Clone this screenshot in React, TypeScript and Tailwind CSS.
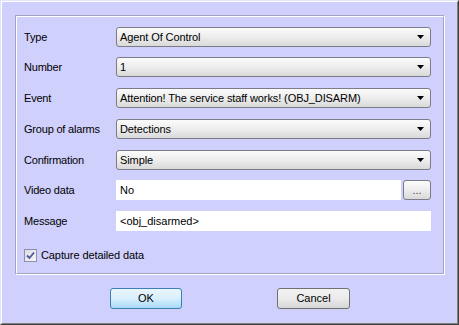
const font = { fontFamily: '"Liberation Sans", Arial, sans-serif' }

function Arrow() {
  return (
    <svg width="7" height="4" viewBox="0 0 7 4" className="shrink-0">
      <path d="M0 0H7L3.5 4Z" fill="#000" />
    </svg>
  )
}

function Combo({ value, className = '' }: { value: string; className?: string }) {
  return (
    <div
      className={`w-[315px] h-[20px] flex items-center justify-between pl-[3px] pr-[6px] rounded-[3px] border border-[#7c7c86] bg-gradient-to-b from-[#fbfbfb] via-[#ededed] to-[#d9d9d9] ${className}`}
    >
      <span className="text-[11px] leading-none tracking-[-0.1px] text-black whitespace-nowrap">{value}</span>
      <Arrow />
    </div>
  )
}

function Row({ label, children, className = '' }: { label: string; children: React.ReactNode; className?: string }) {
  return (
    <div className={`flex items-center ${className}`}>
      <div className="w-[92px] text-[11px] leading-none tracking-[-0.2px] text-black">{label}</div>
      {children}
    </div>
  )
}

export default function App() {
  return (
    <div className="w-[459px] h-[325px] bg-[#d0d0fd]" style={font}>
      {/* window frame */}
      <div className="w-full h-full border-l border-t border-r border-b border-l-[#e4e4ff] border-t-[#e4e4ff] border-r-[#404040] border-b-[#404040]">
        <div className="w-full h-full border-l border-t border-r border-b border-l-white border-t-white border-r-[#808080] border-b-[#808080] flex flex-col">
          {/* group box */}
          <div className="mt-[13px] ml-[13px] w-[430px] h-[260px] border border-t-[#a3a3c4] border-l-[#a3a3c4] border-r-white border-b-white">
            <div className="w-full h-full border border-t-white border-l-white border-r-[#a3a3c4] border-b-[#a3a3c4] pl-[7px] pt-[10px] flex flex-col">
              <Row label="Type">
                <Combo value="Agent Of Control" />
              </Row>
              <Row label="Number" className="mt-[10px]">
                <Combo value="1" />
              </Row>
              <Row label="Event" className="mt-[11px]">
                <Combo value="Attention! The service staff works! (OBJ_DISARM)" />
              </Row>
              <Row label="Group of alarms" className="mt-[11px]">
                <Combo value="Detections" />
              </Row>
              <Row label="Confirmation" className="mt-[11px]">
                <Combo value="Simple" />
              </Row>
              <Row label="Video data" className="mt-[10px]">
                <div className="w-[285px] h-[20px] bg-white flex items-center pl-[4px] text-[11px] leading-none text-black">
                  No
                </div>
                <button className="ml-[2px] w-[28px] h-[20px] rounded-[3px] border border-[#7c7c86] bg-gradient-to-b from-[#fbfbfb] via-[#ededed] to-[#d9d9d9] flex items-end justify-center pb-[3px] text-[11px] leading-none text-[#444]">
                  ...
                </button>
              </Row>
              <Row label="Message" className="mt-[11px]">
                <div className="w-[315px] h-[20px] bg-white flex items-center pl-[4px] text-[11px] leading-none text-black">
                  &lt;obj_disarmed&gt;
                </div>
              </Row>
              <div className="mt-[18px] flex items-center gap-[4px]">
                <div className="w-[13px] h-[13px] border border-[#8e8fb8] bg-gradient-to-br from-[#dcdcdc] to-[#f8f8f8] flex items-center justify-center">
                  <svg width="9" height="9" viewBox="0 0 9 9">
                    <path d="M1 4.5L3.5 7L8 1.5" stroke="#4a55a0" strokeWidth="1.8" fill="none" />
                  </svg>
                </div>
                <span className="text-[11px] leading-none tracking-[-0.1px] text-black">Capture detailed data</span>
              </div>
            </div>
          </div>
          {/* buttons */}
          <div className="mt-[13px] flex">
            <button className="ml-[108px] w-[72px] h-[21px] rounded-[3px] border border-[#3c7fb1] bg-gradient-to-b from-[#eaf6fd] via-[#d9f0fc] to-[#a7d9f5] text-[11px] leading-none text-black">
              OK
            </button>
            <button className="ml-[95px] w-[73px] h-[21px] rounded-[3px] border border-[#707070] bg-gradient-to-b from-[#f2f2f2] via-[#ebebeb] to-[#d6d6d6] text-[11px] leading-none text-black">
              Cancel
            </button>
          </div>
        </div>
      </div>
    </div>
  )
}
